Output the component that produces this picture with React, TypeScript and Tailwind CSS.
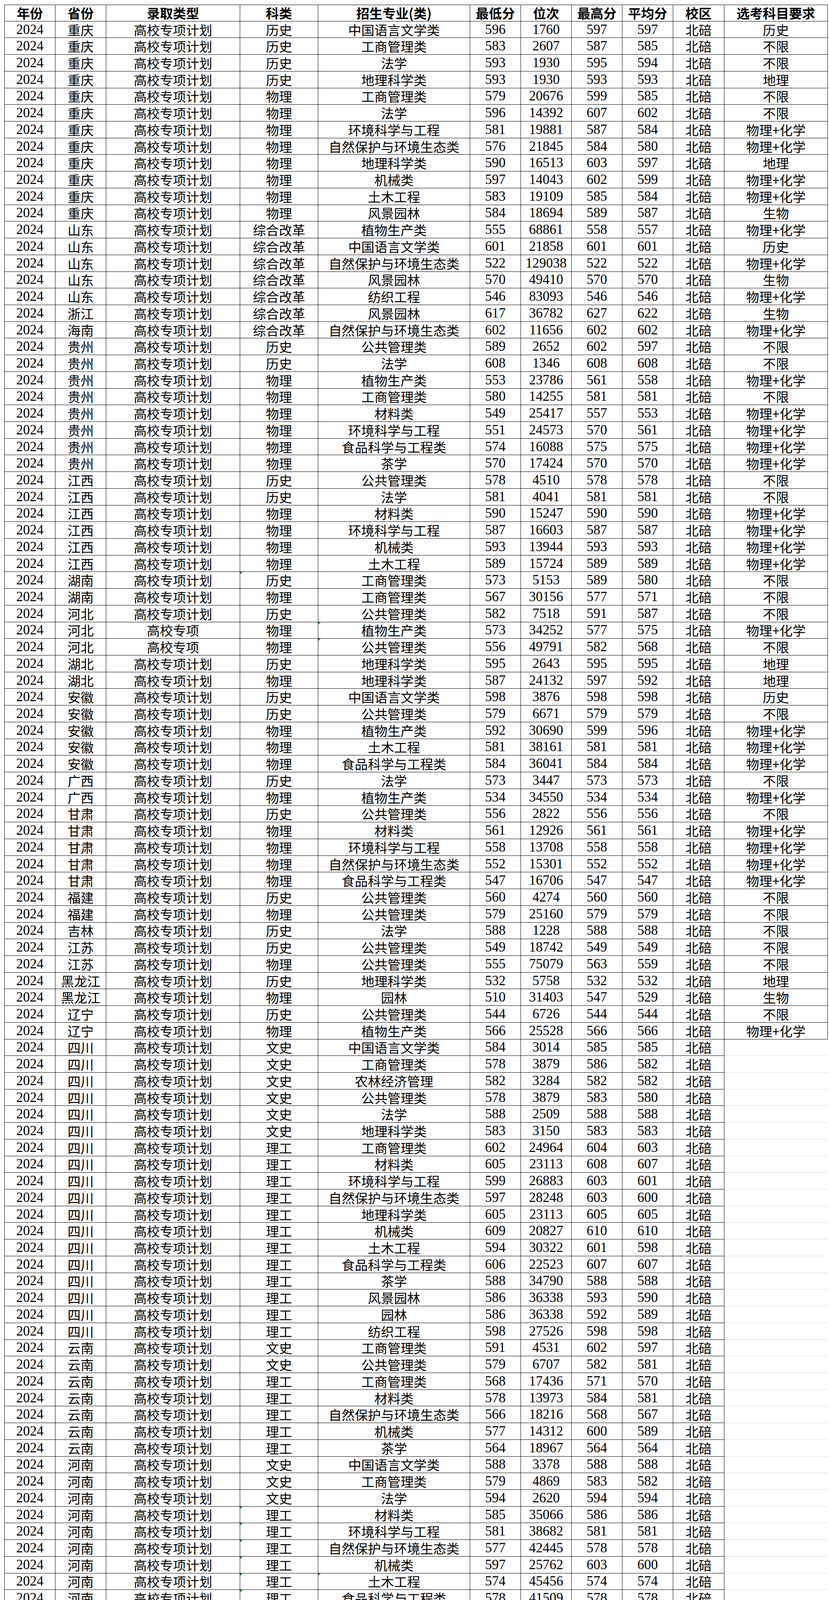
import React from "react";

const RAW = `重庆|历史|中国语言文学类|596|1760|597|597|历史
重庆|历史|工商管理类|583|2607|587|585|不限
重庆|历史|法学|593|1930|595|594|不限
重庆|历史|地理科学类|593|1930|593|593|地理
重庆|物理|工商管理类|579|20676|599|585|不限
重庆|物理|法学|596|14392|607|602|不限
重庆|物理|环境科学与工程|581|19881|587|584|物理+化学
重庆|物理|自然保护与环境生态类|576|21845|584|580|物理+化学
重庆|物理|地理科学类|590|16513|603|597|地理
重庆|物理|机械类|597|14043|602|599|物理+化学
重庆|物理|土木工程|583|19109|585|584|物理+化学
重庆|物理|风景园林|584|18694|589|587|生物
山东|综合改革|植物生产类|555|68861|558|557|物理+化学
山东|综合改革|中国语言文学类|601|21858|601|601|历史
山东|综合改革|自然保护与环境生态类|522|129038|522|522|物理+化学
山东|综合改革|风景园林|570|49410|570|570|生物
山东|综合改革|纺织工程|546|83093|546|546|物理+化学
浙江|综合改革|风景园林|617|36782|627|622|生物
海南|综合改革|自然保护与环境生态类|602|11656|602|602|物理+化学
贵州|历史|公共管理类|589|2652|602|597|不限
贵州|历史|法学|608|1346|608|608|不限
贵州|物理|植物生产类|553|23786|561|558|物理+化学
贵州|物理|工商管理类|580|14255|581|581|不限
贵州|物理|材料类|549|25417|557|553|物理+化学
贵州|物理|环境科学与工程|551|24573|570|561|物理+化学
贵州|物理|食品科学与工程类|574|16088|575|575|物理+化学
贵州|物理|茶学|570|17424|570|570|物理+化学
江西|历史|公共管理类|578|4510|578|578|不限
江西|历史|法学|581|4041|581|581|不限
江西|物理|材料类|590|15247|590|590|物理+化学
江西|物理|环境科学与工程|587|16603|587|587|物理+化学
江西|物理|机械类|593|13944|593|593|物理+化学
江西|物理|土木工程|589|15724|589|589|物理+化学
湖南|历史|工商管理类|573|5153|589|580|不限
湖南|物理|工商管理类|567|30156|577|571|不限
河北|历史|公共管理类|582|7518|591|587|不限
河北|物理|植物生产类|573|34252|577|575|物理+化学
河北|物理|公共管理类|556|49791|582|568|不限
湖北|历史|地理科学类|595|2643|595|595|地理
湖北|物理|地理科学类|587|24132|597|592|地理
安徽|历史|中国语言文学类|598|3876|598|598|历史
安徽|历史|公共管理类|579|6671|579|579|不限
安徽|物理|植物生产类|592|30690|599|596|物理+化学
安徽|物理|土木工程|581|38161|581|581|物理+化学
安徽|物理|食品科学与工程类|584|36041|584|584|物理+化学
广西|历史|法学|573|3447|573|573|不限
广西|物理|植物生产类|534|34550|534|534|物理+化学
甘肃|历史|公共管理类|556|2822|556|556|不限
甘肃|物理|材料类|561|12926|561|561|物理+化学
甘肃|物理|环境科学与工程|558|13708|558|558|物理+化学
甘肃|物理|自然保护与环境生态类|552|15301|552|552|物理+化学
甘肃|物理|食品科学与工程类|547|16706|547|547|物理+化学
福建|历史|公共管理类|560|4274|560|560|不限
福建|物理|公共管理类|579|25160|579|579|不限
吉林|历史|法学|588|1228|588|588|不限
江苏|历史|公共管理类|549|18742|549|549|不限
江苏|物理|公共管理类|555|75079|563|559|不限
黑龙江|历史|地理科学类|532|5758|532|532|地理
黑龙江|物理|园林|510|31403|547|529|生物
辽宁|历史|公共管理类|544|6726|544|544|不限
辽宁|物理|植物生产类|566|25528|566|566|物理+化学
四川|文史|中国语言文学类|584|3014|585|585|
四川|文史|工商管理类|578|3879|586|582|
四川|文史|农林经济管理|582|3284|582|582|
四川|文史|公共管理类|578|3879|583|580|
四川|文史|法学|588|2509|588|588|
四川|文史|地理科学类|583|3150|583|583|
四川|理工|工商管理类|602|24964|604|603|
四川|理工|材料类|605|23113|608|607|
四川|理工|环境科学与工程|599|26883|603|601|
四川|理工|自然保护与环境生态类|597|28248|603|600|
四川|理工|地理科学类|605|23113|605|605|
四川|理工|机械类|609|20827|610|610|
四川|理工|土木工程|594|30322|601|598|
四川|理工|食品科学与工程类|606|22523|607|607|
四川|理工|茶学|588|34790|588|588|
四川|理工|风景园林|586|36338|593|590|
四川|理工|园林|586|36338|592|589|
四川|理工|纺织工程|598|27526|598|598|
云南|文史|工商管理类|591|4531|602|597|
云南|文史|公共管理类|579|6707|582|581|
云南|理工|工商管理类|568|17436|571|570|
云南|理工|材料类|578|13973|584|581|
云南|理工|自然保护与环境生态类|566|18216|568|567|
云南|理工|机械类|577|14312|600|589|
云南|理工|茶学|564|18967|564|564|
河南|文史|中国语言文学类|588|3378|588|588|
河南|文史|工商管理类|579|4869|583|582|
河南|文史|法学|594|2620|594|594|
河南|理工|材料类|585|35066|586|586|
河南|理工|环境科学与工程|581|38682|581|581|
河南|理工|自然保护与环境生态类|577|42445|578|578|
河南|理工|机械类|597|25762|603|600|
河南|理工|土木工程|574|45456|574|574|
河南|理工|食品科学与工程类|578|41509|578|578|
河南|理工|风景园林|584|35948|584|584|
新疆|文史|法学|502|1215|502|502|
山西|文史|农林经济管理|529|5852|529|529|
山西|理工|环境科学与工程|547|24595|547|547|
陕西|文史|中国语言文学类|560|2424|560|560|
陕西|文史|公共管理类|552|3103|560|556|
陕西|理工|植物生产类|514|38168|528|520|
陕西|理工|工商管理类|527|31869|527|527|
陕西|理工|材料类|528|31436|528|528|
陕西|理工|机械类|561|19153|561|561|
内蒙古|文史|农林经济管理|525|3214|525|525|
内蒙古|理工|植物生产类|562|9186|562|562|
青海|文史|公共管理类|487|1224|487|487|
青海|理工|植物生产类|426|6551|426|426|
青海|理工|农林经济管理|421|7014|421|421|
青海|理工|自然保护与环境生态类|442|5244|442|442|
宁夏|文史|法学|557|829|557|557|
西藏|文史|法学|397||397|397|
西藏|理工|植物生产类|392||392|392|`;

const ROWS = RAW.split("\n").map((l) => l.split("|"));

const SHORT_TYPE = new Set([36, 37]);
const MARK_CAT = new Set([33, 89, 90, 91, 92, 93, 94, 95]);
const MARK_MAJOR = new Set([36, 37, 93]);

const W = [
  "w-[131px]",
  "w-[130px]",
  "w-[343px]",
  "w-[200px]",
  "w-[389px]",
  "w-[130px]",
  "w-[130px]",
  "w-[130px]",
  "w-[130px]",
  "w-[131px]",
  "w-[265px]",
];

const CJK = "font-['Noto_Sans_CJK_SC',sans-serif] text-[33.5px] leading-[34px]";
const NUM = "font-['Liberation_Serif','Noto_Sans_CJK_SC',serif] text-[35px] leading-[34px]";

const cellBase =
  "relative shrink-0 h-[42.72px] flex items-center justify-center border-r border-b border-black text-black whitespace-nowrap";

function Mark() {
  return (
    <span className="absolute top-0 left-0 w-0 h-0 border-t-[6px] border-t-[#1b8a1b] border-r-[6px] border-r-transparent" />
  );
}

const HEADERS = [
  "年份",
  "省份",
  "录取类型",
  "科类",
  "招生专业(类)",
  "最低分",
  "位次",
  "最高分",
  "平均分",
  "校区",
  "选考科目要求",
];

export default function App() {
  return (
    <div className="bg-white h-[4928px] overflow-hidden pt-[12px] pl-[11px]">
      <div className="flex flex-col w-[2109px]">
        <div className="flex h-[42.72px]">
          {HEADERS.map((h, i) => (
            <div
              key={i}
              className={`${cellBase} ${W[i]} border-t ${i === 0 ? "border-l" : ""} font-['Noto_Sans_CJK_SC',sans-serif] text-[33.5px] leading-[34px] font-bold`}
            >
              {h}
            </div>
          ))}
        </div>
        {ROWS.map((r, idx) => {
          const [prov, cat, major, mn, rank, mx, avg, req] = r;
          const noReq = idx >= 61;
          return (
            <div key={idx} className="flex h-[42.72px]">
              <div className={`${cellBase} ${W[0]} border-l ${NUM}`}>2024</div>
              <div className={`${cellBase} ${W[1]} ${CJK}`}>{prov}</div>
              <div className={`${cellBase} ${W[2]} ${CJK}`}>
                {SHORT_TYPE.has(idx) ? "高校专项" : "高校专项计划"}
              </div>
              <div className={`${cellBase} ${W[3]} ${CJK}`}>
                {MARK_CAT.has(idx) && <Mark />}
                {cat}
              </div>
              <div className={`${cellBase} ${W[4]} ${CJK}`}>
                {MARK_MAJOR.has(idx) && <Mark />}
                {major}
              </div>
              <div className={`${cellBase} ${W[5]} ${NUM}`}>{mn}</div>
              <div className={`${cellBase} ${W[6]} ${NUM}`}>{rank}</div>
              <div className={`${cellBase} ${W[7]} ${NUM}`}>{mx}</div>
              <div className={`${cellBase} ${W[8]} ${NUM}`}>{avg}</div>
              <div className={`${cellBase} ${W[9]} ${CJK}`}>北碚</div>
              {noReq ? (
                <div className="shrink-0 w-[265px] h-[42.72px] border-b border-[#dadada]" />
              ) : (
                <div className={`${cellBase} ${W[10]} ${CJK}`}>{req}</div>
              )}
            </div>
          );
        })}
      </div>
    </div>
  );
}
